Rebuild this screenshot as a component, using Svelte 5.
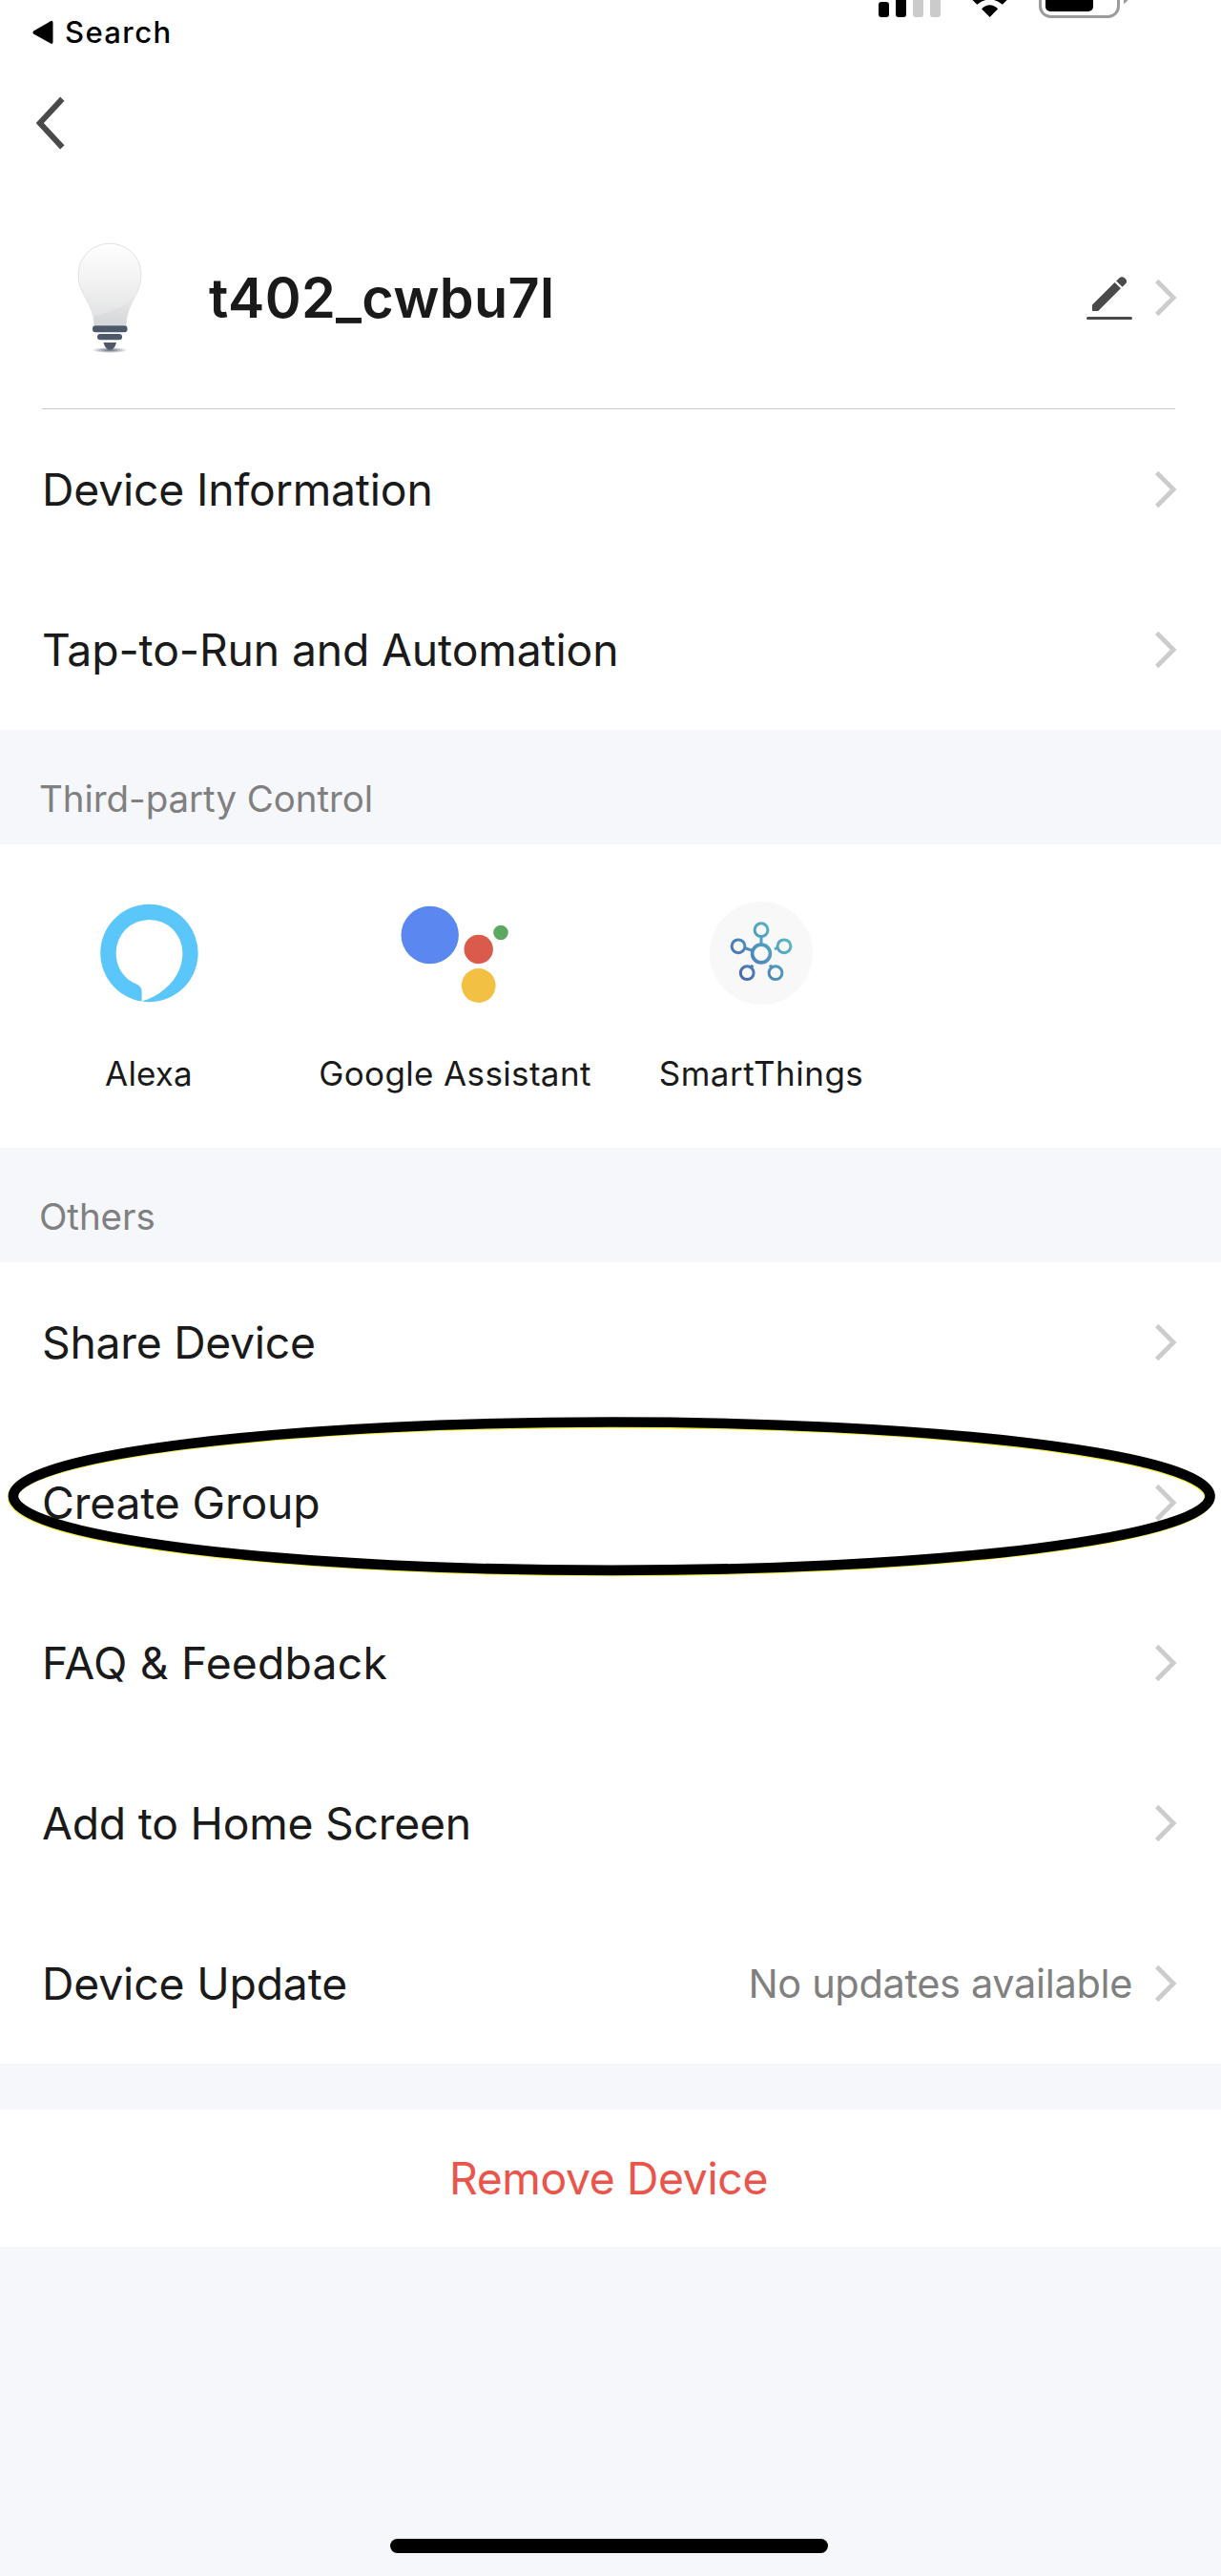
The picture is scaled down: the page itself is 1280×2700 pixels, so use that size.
<script>
    const deviceRows = [
        { label: 'Device Information', spacing: -0.17 },
        { label: 'Tap-to-Run and Automation', spacing: -0.14 }
    ];

    const otherRows = [
        { label: 'Share Device', spacing: -0.27 },
        { label: 'Create Group', spacing: -0.15, circled: true },
        { label: 'FAQ & Feedback', spacing: 0.2 },
        { label: 'Add to Home Screen', spacing: -0.23 },
        { label: 'Device Update', spacing: -0.15, value: 'No updates available' }
    ];

    // satellites of the SmartThings hub, with the stub that points to the centre
    const nodes = [
        { x: 54, y: 29.7, d: 'M54 37v9' },
        { x: 30, y: 46.8, d: 'M37 48.8l8 2.6' },
        { x: 78, y: 46.8, d: 'M71 48.6l-3 1' },
        { x: 39.2, y: 74.7, d: 'M43.5 69l1.6-2.4' },
        { x: 69, y: 74.7, d: 'M64.7 69l-1.6-2.4' }
    ];
</script>

{#snippet chevron()}
    <svg class="chevron" viewBox="0 0 24 40" width="24" height="40">
        <path d="M2.700 2.500 20.200 20 2.700 37.500" fill="none" stroke="#cccccc" stroke-width="4.700" />
    </svg>
{/snippet}

{#snippet row(item)}
    <div class="row">
        <span class="label" style="letter-spacing:{item.spacing}px">{item.label}</span>
        {#if item.value}
            <span class="value">{item.value}</span>
        {/if}
        {@render chevron()}
        {#if item.circled}
            <svg class="ring" viewBox="0 0 1280 180" width="1280" height="180">
                <ellipse cx="640.3" cy="90.3" rx="627.3" ry="77.7" stroke="#f4ee3c" />
                <ellipse cx="641.2" cy="89.2" rx="627.3" ry="77.7" stroke="#000000" />
            </svg>
        {/if}
    </div>
{/snippet}

<main>
    <div class="status">
        <div class="back-app">
            <svg viewBox="0 0 22 26" width="22" height="26">
                <path d="M1.2 11.6 19 1.2Q21.5 0 21.5 3V22.5Q21.5 26 19 24.6L1.2 14.4Q-.4 13 1.2 11.6Z" />
            </svg>
            <span>Search</span>
        </div>
        <svg class="indicators" viewBox="0 0 270 20" width="270" height="20">
            <rect x="1" y="2" width="11" height="16" rx="3" />
            <rect x="19" y="-10" width="11" height="28" rx="3" />
            <rect x="37" y="-16" width="11" height="34" rx="3" fill="#cbcbcb" />
            <rect x="55" y="-22" width="11" height="40" rx="3" fill="#cbcbcb" />
            <path d="M117.6 18 109 9.3Q117.6 1.2 126.2 9.3Z" />
            <path d="M99.5 0 104.300 4.800Q117.6-6 130.9 4.8L135.7 0V-8H99.5Z" />
            <rect x="170.5" y="-22" width="82" height="39.5" rx="11" fill="none" stroke="#9b9b9b" stroke-width="3" />
            <rect x="176" y="-20" width="50" height="32" rx="5" />
            <path d="M258-10V4Q262 2.5 262.5-1V-10Z" fill="#9b9b9b" />
        </svg>
    </div>

    <nav>
        <svg viewBox="0 0 32 56" width="32" height="56">
            <path d="M28.3 2.6 4.8 28 28.3 53.4" fill="none" stroke="#4a4a4a" stroke-width="6" />
        </svg>
    </nav>

    <header>
        <svg class="bulb" viewBox="0 0 72 116" width="72" height="116">
            <defs>
                <linearGradient id="glass" x1="0" y1="0" x2="0" y2="1">
                    <stop offset="0" stop-color="#fefefe" />
                    <stop offset="0.5" stop-color="#f1f1f1" />
                    <stop offset="1" stop-color="#dedfe1" />
                </linearGradient>
                <linearGradient id="shine" x1="0" y1="0" x2="0" y2="1">
                    <stop offset="0" stop-color="#c9ccd0" stop-opacity="0" />
                    <stop offset="1" stop-color="#c9ccd0" stop-opacity="0.45" />
                </linearGradient>
                <radialGradient id="shadow">
                    <stop offset="0" stop-color="#4d586b" stop-opacity="0.9" />
                    <stop offset="1" stop-color="#4d586b" stop-opacity="0" />
                </radialGradient>
            </defs>
            <path d="M36 1.3C54 1.3 69 15 69 34.5C69 55 54 62 53 87H20C19 62 3 55 3 34.5C3 15 18 1.3 36 1.3Z" fill="url(#glass)" stroke="#e2e2e2" stroke-width="1" />
            <path d="M63 54C56 65 45 70 34 73C28 75 22 77 19 78L20 86.5H53C53 72 58 64 63 54Z" fill="url(#shine)" />
            <ellipse cx="36" cy="113" rx="19" ry="3" fill="url(#shadow)" />
            <rect x="18" y="87.3" width="36.5" height="7" rx="3" fill="#4d586b" />
            <rect x="23" y="96" width="26" height="6.2" rx="3" fill="#4d586b" />
            <path d="M29.5 105H43C42 109 40 112.5 36.3 112.5S30.5 109 29.5 105Z" fill="#4d586b" />
        </svg>
        <h1>t402_cwbu7l</h1>
        <svg class="pencil" viewBox="0 0 48 46" width="48" height="46">
            <path d="M6 37V30.5L29.6 7 35.900 13.300 12.200 37Z" fill="#4a4a4a" />
            <path d="M31.2 5.400 34.8 1.900Q37.500 .2 40.400 2.700T41.400 8L37.600 11.700Z" fill="#4a4a4a" />
            <rect x="0" y="43" width="48" height="3" rx="1.5" fill="#4a4a4a" />
        </svg>
        {@render chevron()}
    </header>

    <hr />

    {#each deviceRows as item}
        {@render row(item)}
    {/each}

    <h2>Third-party Control</h2>
    <div class="partners">
        <div class="partner">
            <svg viewBox="0 0 108 108" width="108" height="108">
                <path d="M46.6 104.6A51.2 51.2 0 0 1 54.4 2.8A51.2 51.2 0 1 1 46.6 104.6C71 97 89.4 78 89.4 53.8A34.9 34.9 0 0 0 19.6 53.8C19.6 69 28 81 40.7 86.2Q46.6 88.5 46.6 94.5Z" fill="#5bc6f9" />
            </svg>
            <span>Alexa</span>
        </div>
        <div class="partner assistant">
            <svg viewBox="0 0 120 108" width="120" height="108">
                <circle cx="33.7" cy="35" r="30.2" fill="#5b87f0" />
                <circle cx="84.7" cy="50" r="15.2" fill="#da5b4b" />
                <circle cx="108" cy="32.5" r="7.8" fill="#5da860" />
                <circle cx="84.7" cy="88" r="17.9" fill="#f2c144" />
            </svg>
            <span>Google Assistant</span>
        </div>
        <div class="partner things">
            <svg viewBox="0 0 108 108" width="108" height="108">
                <defs>
                    <linearGradient id="hub" gradientUnits="userSpaceOnUse" x1="32" y1="78" x2="80" y2="38">
                        <stop offset="0" stop-color="#4a68b0" />
                        <stop offset="0.5" stop-color="#4d93bb" />
                        <stop offset="1" stop-color="#57b7c1" />
                    </linearGradient>
                </defs>
                <circle cx="54" cy="54" r="54" fill="#f8f8f8" />
                <g fill="none" stroke="url(#hub)" stroke-width="3">
                    <circle cx="54" cy="54.5" r="9.4" stroke-width="3.6" />
                    {#each nodes as node}
                        <circle cx={node.x} cy={node.y} r="6.9" />
                        <path d={node.d} />
                    {/each}
                </g>
            </svg>
            <span>SmartThings</span>
        </div>
    </div>

    <h2>Others</h2>
    {#each otherRows as item}
        {@render row(item)}
    {/each}

    <button>Remove Device</button>

    <footer><div class="home-bar"></div></footer>
</main>

<style>
    :global(body) {
        margin: 0;
        background: #f6f7fb;
    }

    main {
        display: flex;
        flex-direction: column;
        width: 1280px;
        height: 2700px;
        overflow: hidden;
        background: #f6f7fb;
        color: #1a1a1a;
        font-family: Inter, sans-serif;
    }

    svg {
        display: block;
        flex: none;
    }

    .status {
        display: flex;
        justify-content: space-between;
        height: 68px;
        padding: 0 90px 0 34px;
        background: #ffffff;
        color: #000000;
    }

    .back-app {
        display: flex;
        align-items: center;
        gap: 12px;
        height: 67px;
        font-size: 31px;
        font-weight: 500;
        letter-spacing: 1.4px;
    }

    nav {
        display: flex;
        align-items: center;
        height: 122px;
        padding-left: 37px;
        background: #ffffff;
    }

    header {
        display: flex;
        align-items: center;
        height: 238px;
        padding: 6px 46px 0 79px;
        box-sizing: border-box;
        background: #ffffff;
    }

    h1 {
        flex: 1;
        margin: 0 0 0 68px;
        font-size: 57.5px;
        font-weight: 600;
        letter-spacing: 0.3px;
    }

    .pencil {
        margin-right: 23px;
    }

    hr {
        width: 100%;
        height: 1px;
        margin: 0;
        border: 0;
        background: linear-gradient(#c8c8c8, #c8c8c8) 44px 0 / 1188px 1px no-repeat #ffffff;
    }

    .row {
        position: relative;
        display: flex;
        align-items: center;
        height: 168px;
        padding: 0 46px 0 44px;
        box-sizing: border-box;
        background: #ffffff;
        font-size: 46.3px;
    }

    .label {
        flex: 1;
    }

    .value {
        margin-right: 23px;
        color: #808080;
        font-size: 41.5px;
        letter-spacing: -0.35px;
    }

    .ring {
        position: absolute;
        left: 0;
        top: -12px;
        fill: none;
        stroke-width: 10.6px;
        z-index: 1;
        pointer-events: none;
    }

    h2 {
        height: 120px;
        margin: 0;
        padding: 48px 42px 0 41px;
        box-sizing: border-box;
        color: #808080;
        font-size: 38.5px;
        font-weight: 400;
        line-height: 48px;
        letter-spacing: -0.07px;
    }

    .partners {
        display: grid;
        grid-template-columns: repeat(3, 300px);
        column-gap: 21px;
        height: 318px;
        padding: 60px 0 0 6px;
        box-sizing: border-box;
        background: #ffffff;
    }

    .partner {
        display: flex;
        flex-direction: column;
        align-items: center;
        gap: 51px;
        font-size: 35px;
        line-height: 42px;
        letter-spacing: 0.16px;
    }

    .assistant {
        letter-spacing: 0.36px;
    }

    .things {
        letter-spacing: 0.5px;
    }

    button {
        height: 144px;
        margin-top: 48px;
        padding: 0 4px 0 0;
        border: 0;
        background: #ffffff;
        color: #eb544b;
        font-family: inherit;
        font-size: 46.3px;
        letter-spacing: -0.36px;
    }

    footer {
        display: flex;
        flex: 1;
        align-items: flex-end;
        justify-content: center;
        padding: 0 3px 24px 0;
    }

    .home-bar {
        width: 459px;
        height: 15px;
        border-radius: 8px;
        background: #000000;
    }
</style>
